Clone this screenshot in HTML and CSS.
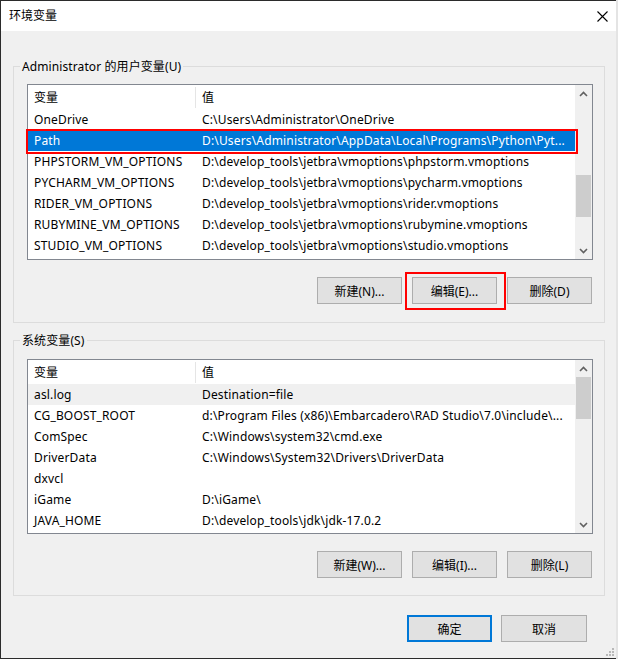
FILE: index.html
```html
<!DOCTYPE html>
<html lang="zh-CN">
<head>
<meta charset="utf-8">
<title>环境变量</title>
<link rel="stylesheet" href="styles.css">
</head>
<body>
<div class="window">
  <div class="titlebar">
    <span class="title">环境变量</span>
    <span class="close">
      <svg width="11" height="11" viewBox="0 0 11 11"><path d="M0.5 0.5 L10.5 10.5 M10.5 0.5 L0.5 10.5" stroke="#000" stroke-width="1.1" fill="none"/></svg>
    </span>
  </div>
  <div class="content">
    <fieldset class="group group-user">
      <legend>Administrator 的用户变量(U)</legend>
      <div class="list list-user">
        <div class="rows">
          <div class="head"><span class="c1">变量</span><span class="sep"></span><span class="c2">值</span></div>
          <div class="row"><span class="c1">OneDrive</span><span class="c2">C:\Users\Administrator\OneDrive</span></div>
          <div class="row sel"><span class="c1">Path</span><span class="c2">D:\Users\Administrator\AppData\Local\Programs\Python\Pyt...</span></div>
          <div class="row"><span class="c1">PHPSTORM_VM_OPTIONS</span><span class="c2">D:\develop_tools\jetbra\vmoptions\phpstorm.vmoptions</span></div>
          <div class="row"><span class="c1">PYCHARM_VM_OPTIONS</span><span class="c2">D:\develop_tools\jetbra\vmoptions\pycharm.vmoptions</span></div>
          <div class="row"><span class="c1">RIDER_VM_OPTIONS</span><span class="c2">D:\develop_tools\jetbra\vmoptions\rider.vmoptions</span></div>
          <div class="row"><span class="c1">RUBYMINE_VM_OPTIONS</span><span class="c2">D:\develop_tools\jetbra\vmoptions\rubymine.vmoptions</span></div>
          <div class="row"><span class="c1">STUDIO_VM_OPTIONS</span><span class="c2">D:\develop_tools\jetbra\vmoptions\studio.vmoptions</span></div>
        </div>
        <div class="scrollbar">
          <span class="arrow"><svg width="9" height="6" viewBox="0 0 9 6"><path d="M1 5 L4.5 1.5 L8 5" stroke="#606060" stroke-width="1.6" fill="none"/></svg></span>
          <div class="track"><div class="thumb thumb-user"></div></div>
          <span class="arrow"><svg width="9" height="6" viewBox="0 0 9 6"><path d="M1 1 L4.5 4.5 L8 1" stroke="#606060" stroke-width="1.6" fill="none"/></svg></span>
        </div>
      </div>
      <div class="buttons">
        <button class="btn">新建(N)...</button>
        <button class="btn marked">编辑(E)...</button>
        <button class="btn">删除(D)</button>
      </div>
    </fieldset>

    <fieldset class="group group-sys">
      <legend>系统变量(S)</legend>
      <div class="list list-sys">
        <div class="rows">
          <div class="head"><span class="c1">变量</span><span class="sep"></span><span class="c2">值</span></div>
          <div class="row hover"><span class="c1">asl.log</span><span class="c2">Destination=file</span></div>
          <div class="row"><span class="c1">CG_BOOST_ROOT</span><span class="c2">d:\Program Files (x86)\Embarcadero\RAD Studio\7.0\include\...</span></div>
          <div class="row"><span class="c1">ComSpec</span><span class="c2">C:\Windows\system32\cmd.exe</span></div>
          <div class="row"><span class="c1">DriverData</span><span class="c2">C:\Windows\System32\Drivers\DriverData</span></div>
          <div class="row"><span class="c1">dxvcl</span><span class="c2"></span></div>
          <div class="row"><span class="c1">iGame</span><span class="c2">D:\iGame\</span></div>
          <div class="row"><span class="c1">JAVA_HOME</span><span class="c2">D:\develop_tools\jdk\jdk-17.0.2</span></div>
        </div>
        <div class="scrollbar">
          <span class="arrow"><svg width="9" height="6" viewBox="0 0 9 6"><path d="M1 5 L4.5 1.5 L8 5" stroke="#606060" stroke-width="1.6" fill="none"/></svg></span>
          <div class="track"><div class="thumb thumb-sys"></div></div>
          <span class="arrow"><svg width="9" height="6" viewBox="0 0 9 6"><path d="M1 1 L4.5 4.5 L8 1" stroke="#606060" stroke-width="1.6" fill="none"/></svg></span>
        </div>
      </div>
      <div class="buttons">
        <button class="btn">新建(W)...</button>
        <button class="btn">编辑(I)...</button>
        <button class="btn">删除(L)</button>
      </div>
    </fieldset>

    <div class="dialog-buttons">
      <button class="btn default">确定</button>
      <button class="btn cancel">取消</button>
    </div>
  </div>
  <svg class="grip" width="9" height="9" viewBox="0 0 9 9">
    <rect x="6" y="0" width="2" height="2" fill="#b8b8b8"/>
    <rect x="3" y="3" width="2" height="2" fill="#b8b8b8"/>
    <rect x="6" y="3" width="2" height="2" fill="#b8b8b8"/>
    <rect x="0" y="6" width="2" height="2" fill="#b8b8b8"/>
    <rect x="3" y="6" width="2" height="2" fill="#b8b8b8"/>
    <rect x="6" y="6" width="2" height="2" fill="#b8b8b8"/>
  </svg>
</div>
</body>
</html>
```
FILE: styles.css
```css
* { box-sizing: border-box; }
html, body { margin: 0; padding: 0; }
body {
  width: 618px;
  height: 659px;
  overflow: hidden;
  background: #e4e4e4;
  font-family: "Noto Sans", "Noto Sans CJK SC", sans-serif;
  font-size: 12px;
  color: #000;
}
.window {
  width: 616px;
  height: 659px;
  background: #f0f0f0;
  border: 1px solid #2b2b2b;
  border-right: none;
  display: flex;
  flex-direction: column;
  position: relative;
}
.titlebar {
  flex: none;
  height: 30px;
  background: #fff;
  display: flex;
  align-items: center;
  justify-content: space-between;
  padding-left: 8px;
}
.title { font-size: 12px; line-height: 16px; }
.close {
  width: 28px;
  height: 30px;
  display: flex;
  align-items: center;
  justify-content: center;
}
.content {
  flex: 1;
  display: flex;
  flex-direction: column;
  padding: 0 11px 0 12px;
}
.group {
  margin: 0;
  min-width: 0;
  border: 1px solid #dcdcdc;
  padding: 9px 11px 18px 6px;
}
.group-user { margin-top: 27px; }
.group-sys { margin-top: 9px; padding-top: 10px; padding-bottom: 17px; }
.group legend {
  padding: 0 2px;
  line-height: 17px;
  letter-spacing: 0.1px;
}
.list {
  margin-left: 7px;
  width: 566px;
  border: 1px solid #828790;
  background: #fff;
  display: flex;
}
.list-user { height: 176px; }
.list-sys { height: 175px; }
.rows {
  flex: 1;
  min-width: 0;
  display: flex;
  flex-direction: column;
}
.head {
  height: 24px;
  display: grid;
  grid-template-columns: 167px 1px 1fr;
  line-height: 24px;
  padding-top: 1px;
  line-height: 23px;
}
.head .sep {
  margin-top: 1px;
  margin-bottom: 1px;
  background: #e5e5e5;
}
.row {
  height: 21px;
  padding-top: 1px;
  line-height: 20px;
  display: grid;
  grid-template-columns: 168px 1fr;
  position: relative;
  letter-spacing: 0.16px;
}
.c1, .c2 {
  padding-left: 6px;
  white-space: nowrap;
  overflow: hidden;
}
.row .c2 { padding-right: 2px; }
.row.sel {
  background: #0078d7;
  color: #fff;
  z-index: 2;
}
.row.sel::after {
  content: "";
  position: absolute;
  left: -2px;
  right: -3px;
  top: -1px;
  bottom: -3px;
  border: 2px solid #f00;
}
.row.hover { background: #f0f0f0; }
.scrollbar {
  flex: none;
  width: 17px;
  background: #f0f0f0;
  display: flex;
  flex-direction: column;
}
.arrow {
  flex: none;
  height: 17px;
  display: flex;
  align-items: center;
  justify-content: center;
}
.track { flex: 1; }
.thumb {
  margin-left: 1px;
  width: 15px;
  background: #cdcdcd;
}
.thumb-user { margin-top: 73px; height: 42px; }
.thumb-sys { margin-top: 0; height: 42px; }
.buttons {
  margin-top: 17px;
  margin-right: 1px;
  display: flex;
  justify-content: flex-end;
  gap: 10px;
}
.btn {
  width: 85px;
  height: 27px;
  padding: 0;
  margin: 0;
  background: #e1e1e1;
  border: 1px solid #adadad;
  font-family: inherit;
  font-size: 12px;
  color: #000;
  position: relative;
}
.btn.marked::after {
  content: "";
  position: absolute;
  left: -8px;
  right: -10px;
  top: -6px;
  bottom: -7px;
  border: 2px solid #f00;
}
.dialog-buttons {
  margin-top: 19px;
  display: flex;
  justify-content: flex-end;
  gap: 9px;
  padding-right: 18px;
}
.btn.cancel { width: 86px; }
.btn.default {
  border: 2px solid #0078d7;
}
.grip {
  position: absolute;
  right: 1px;
  bottom: 1px;
}
```
